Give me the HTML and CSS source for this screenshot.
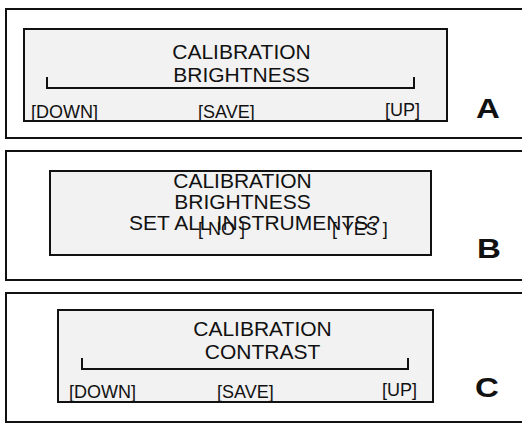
FILE: index.html
```html
<!DOCTYPE html>
<html lang="en">
<head>
    <meta charset="UTF-8">
    <meta name="viewport" content="width=device-width, initial-scale=1.0">
    <title>Calibration screens</title>
    <link rel="stylesheet" href="styles.css">
</head>
<body>

    <!-- A: brightness adjust -->
    <div class="panel panel-a">
        <div class="screen">
            <div class="title">
                <div>CALIBRATION</div>
                <div>BRIGHTNESS</div>
            </div>
            <div class="scale"></div>
            <div class="keys">
                <span>[DOWN]</span>
                <span>[SAVE]</span>
                <span class="up">[UP]</span>
            </div>
        </div>
        <div class="tag">A</div>
    </div>

    <!-- B: apply to all -->
    <div class="panel panel-b">
        <div class="screen">
            <div class="title">
                <div>CALIBRATION</div>
                <div>BRIGHTNESS</div>
                <div class="ask">SET ALL INSTRUMENTS?</div>
            </div>
            <div class="keys">
                <span>[ NO ]</span>
                <span>[ YES ]</span>
            </div>
        </div>
        <div class="tag">B</div>
    </div>

    <!-- C: contrast adjust -->
    <div class="panel panel-c">
        <div class="screen">
            <div class="title">
                <div>CALIBRATION</div>
                <div>CONTRAST</div>
            </div>
            <div class="scale"></div>
            <div class="keys">
                <span>[DOWN]</span>
                <span>[SAVE]</span>
                <span class="up">[UP]</span>
            </div>
        </div>
        <div class="tag">C</div>
    </div>

</body>
</html>
```

FILE: styles.css
```css
body {
    margin: 0;
    padding-top: 8px;
    overflow: hidden;
    background: #fff;
    color: #111;
    font-family: "Liberation Sans", Arial, sans-serif;
}

.panel {
    display: flex;
    align-items: flex-start;
    box-sizing: border-box;
    width: 540px;
    height: 131px;
    margin-left: 5px;
    border: 2px solid #111;
}
.panel + .panel {
    margin-top: 11px;
}

.screen {
    box-sizing: border-box;
    height: 94px;
    margin-top: 18px;
    border: 2px solid #111;
    background: #f2f2f2;
}

.title {
    font-size: 21px;
    line-height: 23px;
    text-align: center;
    padding-top: 10px;
}

/* the slider line with end ticks */
.scale {
    box-sizing: border-box;
    height: 12px;
    margin-top: -9px;
    border: 2px solid #111;
    border-top: 0;
}

.keys {
    display: grid;
    font-size: 18px;
    line-height: 18px;
    margin-top: 14px;
    white-space: pre;
}
.keys .up {
    margin-top: -2px;
}

.tag {
    font-size: 28px;
    font-weight: bold;
    line-height: 28px;
    transform: scaleX(1.18);
    transform-origin: left;
}

/* A */
.panel-a .screen { margin-left: 16px; width: 425px; }
.panel-a .title { padding-left: 12px; }
.panel-a .scale { margin-left: 21px; width: 369px; }
.panel-a .keys { padding-left: 6px; grid-template-columns: 167px 187px auto; }
.panel-a .tag { margin-left: 28px; margin-top: 85px; }

/* B */
.panel-b .screen { margin-left: 42px; width: 383px; height: 86px; }
.panel-b .title { padding-top: 0; margin-top: -2px; line-height: 21px; padding-left: 4px; }
.panel-b .ask { padding-left: 24px; }
.panel-b .keys { margin-top: -13px; padding-left: 147px; grid-template-columns: 134px auto; }
.panel-b .tag { margin-left: 45px; margin-top: 83px; }

/* C */
.panel-c .screen { margin-top: 15px; margin-left: 50px; width: 377px; }
.panel-c .title { padding-top: 6px; padding-left: 34px; }
.panel-c .scale { margin-top: -5px; margin-left: 22px; width: 328px; }
.panel-c .keys { margin-top: 13px; padding-left: 10px; grid-template-columns: 148px 165px auto; }
.panel-c .tag { margin-left: 41px; margin-top: 80px; }
```
